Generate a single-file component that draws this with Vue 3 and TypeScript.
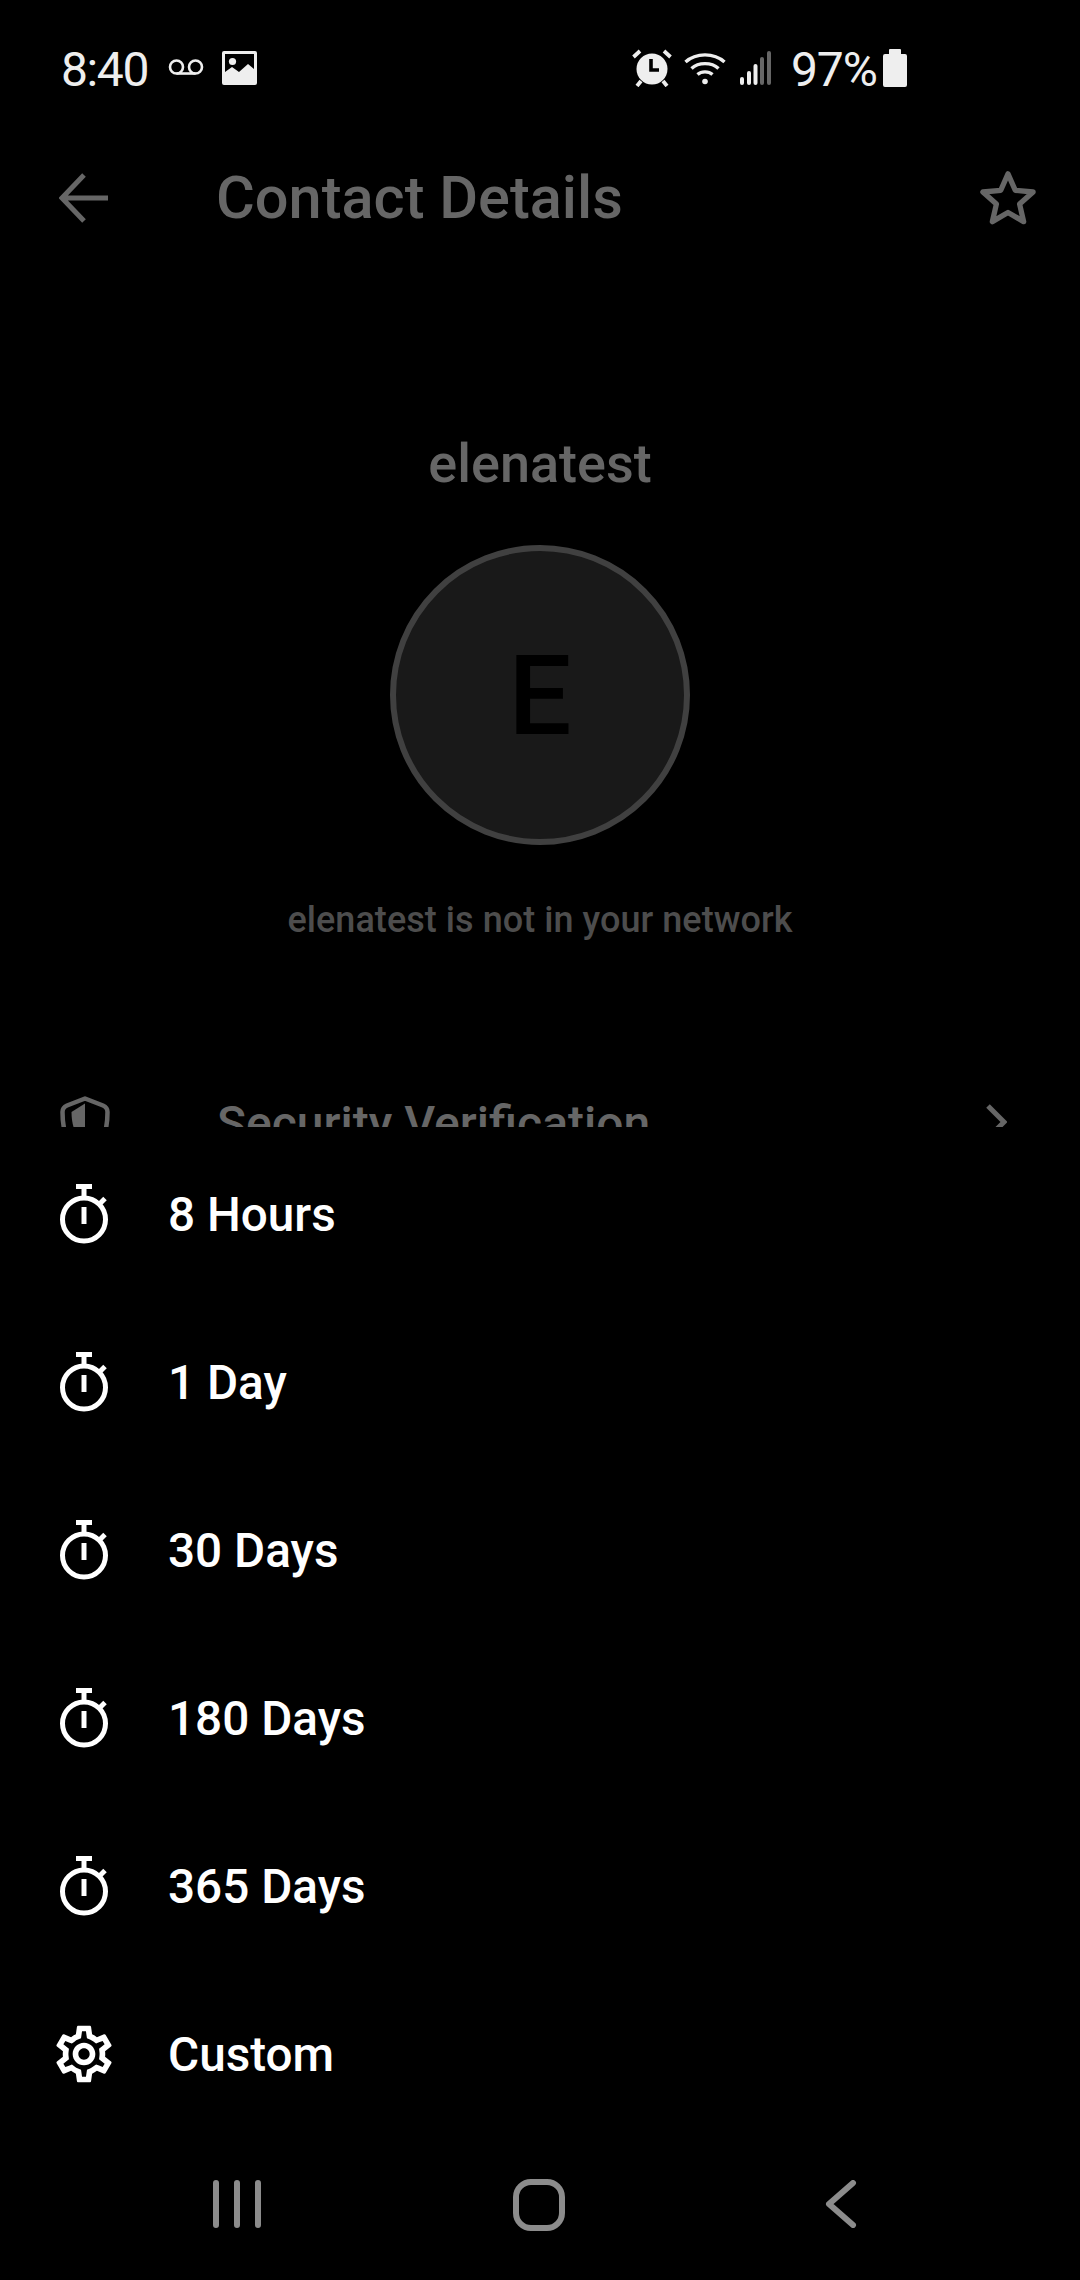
<script setup lang="ts">
const options: string[] = ['8 Hours', '1 Day', '30 Days', '180 Days', '365 Days'];
</script>

<template>
  <div class="page">
    <div class="behind">
      <div class="status">
        <span class="time">8:40</span>
        <svg class="voicemail" width="36" height="20" viewBox="0 0 36 20" fill="none" stroke="#eee" stroke-width="2.6">
          <circle cx="8.5" cy="9" r="6.5" />
          <circle cx="27.5" cy="9" r="6.5" />
          <path d="M8.5 15.5h19" />
        </svg>
        <svg class="picture" width="35" height="34" viewBox="0 0 35 34">
          <path fill="#eee" fill-rule="evenodd" d="M2 0h31a2 2 0 0 1 2 2v30a2 2 0 0 1-2 2H2a2 2 0 0 1-2-2V2a2 2 0 0 1 2-2zm1 3v18l7-5 7 5 9-8 6 5V3z" />
          <circle cx="10.5" cy="10.5" r="3.6" fill="#eee" />
        </svg>
        <div class="status-right">
          <svg width="40" height="38" viewBox="0 0 40 38">
            <circle cx="20" cy="20" r="15.5" fill="#eee" />
            <path d="M19 10v11h8" fill="none" stroke="#000" stroke-width="3.6" />
            <path d="M1.500 8 8 2M38.500 8 32 2M9 32l-4 5M31 32l4 5" stroke="#eee" stroke-width="3.800" fill="none" />
          </svg>
          <svg class="wifi" width="42" height="34" viewBox="0 0 42 34" fill="none" stroke="#eee" stroke-width="3.400">
            <path d="M1.500 11C12 1.500 30 1.500 40.500 11" />
            <path d="M7.500 17.500C14.500 11 27.500 11 34.500 17.500" />
            <path d="M13.500 23.500c4-3.500 11-3.500 15 0" />
            <circle cx="21" cy="30.500" r="2.800" fill="#eee" stroke="none" />
          </svg>
          <svg class="signal" width="31" height="36" viewBox="0 0 31 36">
            <rect x="0" y="27" width="4" height="8" rx="2" fill="#eee" />
            <rect x="7" y="21" width="4" height="14" rx="2" fill="#eee" />
            <rect x="13.500" y="14" width="4" height="21" rx="2" fill="#eee" />
            <rect x="20" y="7" width="4" height="28" rx="2" fill="#666" />
            <rect x="27" y="1" width="4" height="34" rx="2" fill="#666" />
          </svg>
          <span class="battery-text">97%</span>
          <svg class="battery" width="24" height="38" viewBox="0 0 24 38">
            <path fill="#eee" d="M7 0h10a1 1 0 0 1 1 1v4h4a2 2 0 0 1 2 2v29a2 2 0 0 1-2 2H2a2 2 0 0 1-2-2V7a2 2 0 0 1 2-2h4V1a1 1 0 0 1 1-1z" />
          </svg>
        </div>
      </div>

      <div class="header">
        <svg width="50" height="50" viewBox="0 0 50 50" fill="none" stroke="#666" stroke-width="5">
          <path d="M25 2 3 25l22 23M3 25h46" />
        </svg>
        <span class="title">Contact Details</span>
        <svg class="star" width="56" height="56" viewBox="0 0 58 58" fill="none" stroke="#666" stroke-width="5.500" stroke-linejoin="round">
          <path d="M29 4l7.500 17 18.500 1.800-14 12.400 4.200 18.300L29 44l-16.200 9.500L17 35.200 3 22.800 21.500 21z" />
        </svg>
      </div>

      <div class="profile">
        <div class="name">elenatest</div>
        <div class="avatar">E</div>
        <div class="note">elenatest is not in your network</div>
      </div>

      <div class="security">
        <svg width="52" height="60" viewBox="0 0 52 60">
          <path d="M26 4.500 44 11.500Q48.500 13.500 48.500 18C48.500 32 45 46 38 56H14C7 46 3.500 32 3.500 18Q3.500 13.500 8 11.500z" fill="none" stroke="#666" stroke-width="4.500" stroke-linejoin="round" />
          <path d="M26 9.500V50H22C16 40 12.500 30 12.500 18z" fill="#666" />
        </svg>
        <span class="security-label">Security Verification</span>
        <svg class="chevron" width="22" height="36" viewBox="0 0 22 36" fill="none" stroke="#666" stroke-width="5">
          <path d="M3 2l16 16L3 34" />
        </svg>
      </div>
    </div>

    <div class="sheet">
      <div v-for="label in options" :key="label" class="row">
        <span class="icon-slot">
          <svg width="50" height="60" viewBox="0 0 50 60" fill="none" stroke="#fff" stroke-width="5">
            <circle cx="25" cy="35.500" r="21.500" />
            <path d="M17 2.500h16M25 3v11" />
            <path d="M25 23v17" />
            <path d="M41 19.500l5-5" />
          </svg>
        </span>
        <span class="label">{{ label }}</span>
      </div>
      <div class="row">
        <span class="icon-slot">
          <svg width="74" height="74" viewBox="0 0 24 24" fill="#fff">
            <path d="M19.430 12.980c.04-.32.07-.64.07-.98 0-.34-.03-.66-.07-.98l2.110-1.650c.19-.15.24-.42.12-.64l-2-3.460c-.09-.16-.26-.25-.44-.25-.06 0-.12.01-.17.03l-2.490 1c-.52-.4-1.080-.73-1.690-.98l-.38-2.650C14.460 2.180 14.250 2 14 2h-4c-.25 0-.46.18-.49.42l-.38 2.650c-.61.25-1.170.59-1.690.98l-2.490-1c-.06-.02-.12-.03-.18-.03-.17 0-.34.09-.43.25l-2 3.460c-.13.22-.07.49.12.64l2.110 1.650c-.04.32-.07.65-.07.98 0 .33.03.66.07.98l-2.110 1.650c-.19.15-.24.42-.12.64l2 3.460c.09.16.26.25.44.25.06 0 .12-.01.17-.03l2.490-1c.52.4 1.080.73 1.690.98l.38 2.650c.03.24.24.42.49.42h4c.25 0 .46-.18.49-.42l.38-2.650c.61-.25 1.170-.59 1.690-.98l2.490 1c.06.02.12.03.18.03.17 0 .34-.09.43-.25l2-3.460c.12-.22.07-.49-.12-.64l-2.110-1.650zm-1.980-1.710c.04.31.05.52.05.73 0 .21-.02.43-.05.73l-.14 1.130.89.7 1.080.84-.7 1.210-1.270-.51-1.040-.42-.9.68c-.43.32-.84.56-1.250.73l-1.060.43-.16 1.130-.2 1.350h-1.400l-.19-1.350-.16-1.130-1.060-.43c-.43-.18-.83-.41-1.230-.71l-.91-.7-1.060.43-1.270.51-.7-1.210 1.080-.84.89-.7-.14-1.130c-.03-.31-.05-.54-.05-.74s.02-.43.05-.73l.14-1.130-.89-.7-1.080-.84.7-1.210 1.270.51 1.040.42.9-.68c.43-.32.84-.56 1.250-.73l1.060-.43.16-1.130.2-1.350h1.390l.19 1.350.16 1.130 1.060.43c.43.18.83.41 1.230.71l.91.7 1.060-.43 1.270-.51.7 1.210-1.070.85-.89.7.14 1.130zM12 8c-2.210 0-4 1.790-4 4s1.790 4 4 4 4-1.790 4-4-1.790-4-4-4zm0 6c-1.100 0-2-.9-2-2s.9-2 2-2 2 .9 2 2-.9 2-2 2z" />
          </svg>
        </span>
        <span class="label">Custom</span>
      </div>
    </div>

    <div class="nav">
      <svg class="nav-recent" width="48" height="48" viewBox="0 0 48 48" stroke="#8c8c8c" stroke-width="6" stroke-linecap="round">
        <path d="M3 3v42M24 3v42M45 3v42" />
      </svg>
      <svg class="nav-home" width="52" height="52" viewBox="0 0 52 52">
        <rect x="3" y="3" width="46" height="46" rx="15" fill="none" stroke="#8c8c8c" stroke-width="6" />
      </svg>
      <svg class="nav-back" width="32" height="48" viewBox="0 0 32 48" fill="none" stroke="#8c8c8c" stroke-width="6" stroke-linecap="round" stroke-linejoin="round">
        <path d="M28 3 4 24l24 21" />
      </svg>
    </div>
  </div>
</template>

<style>
html,
body {
  background: #000;
}
</style>

<style scoped>
.page {
  width: 1080px;
  height: 2280px;
  display: flex;
  flex-direction: column;
  overflow: hidden;
  background: #000;
  font-family: Roboto, "Liberation Sans", sans-serif;
}
.behind {
  height: 1127px;
  flex: none;
  overflow: hidden;
}
.status {
  height: 136px;
  display: flex;
  align-items: center;
  padding-left: 61px;
  color: #eee;
}
.time {
  margin-top: 2px;
  font-size: 48px;
  letter-spacing: -1.4px;
}
.voicemail {
  margin-left: 20px;
}
.picture {
  margin-left: 18px;
}
.status-right {
  margin-left: auto;
  margin-right: 173px;
  display: flex;
  align-items: center;
}
.wifi {
  margin-left: 12px;
}
.signal {
  margin-left: 14px;
}
.battery-text {
  margin: 2px 0 0 20px;
  font-size: 48px;
  letter-spacing: -1px;
}
.battery {
  margin-left: 6px;
}
.header {
  height: 124px;
  display: flex;
  align-items: center;
  padding: 0 43px 0 59px;
}
.title {
  margin-left: 107px;
  font-size: 59.500px;
  font-weight: 500;
  color: #666;
}
.star {
  margin-left: auto;
  margin-right: 1px;
}
.profile {
  display: flex;
  flex-direction: column;
  align-items: center;
  padding-top: 173px;
}
.name {
  font-size: 54px;
  line-height: 62px;
  font-weight: 500;
  color: #666;
}
.avatar {
  margin-top: 50px;
  width: 300px;
  height: 300px;
  box-sizing: border-box;
  border: 6px solid #404040;
  border-radius: 50%;
  background: #191919;
  display: flex;
  align-items: center;
  justify-content: center;
  font-size: 112px;
  font-weight: 500;
  color: #000;
}
.note {
  margin-top: 54px;
  font-size: 36px;
  line-height: 42px;
  font-weight: 500;
  letter-spacing: 0.05px;
  color: #4d4d4d;
}
.security {
  margin-top: 153px;
  display: flex;
  align-items: flex-start;
  padding: 0 73px 0 59px;
}
.security-label {
  margin-left: 106px;
  font-size: 48px;
  line-height: 60px;
  font-weight: 500;
  color: #666;
}
.chevron {
  margin-left: auto;
  margin-top: 10px;
}
.sheet {
  flex: none;
  padding-top: 3px;
}
.row {
  height: 168px;
  display: flex;
  align-items: center;
  padding-left: 50px;
}
.icon-slot {
  width: 68px;
  display: flex;
  justify-content: center;
}
.label {
  margin: 2px 0 0 50px;
  font-size: 47.700px;
  font-weight: 500;
  color: #fff;
}
.nav {
  flex: 1;
  display: flex;
  align-items: flex-start;
  padding: 41px 0 0 213px;
}
.nav-recent,
.nav-back {
  margin-top: 1px;
}
.nav-home {
  margin-left: 252px;
}
.nav-back {
  margin-left: 260px;
}
</style>
